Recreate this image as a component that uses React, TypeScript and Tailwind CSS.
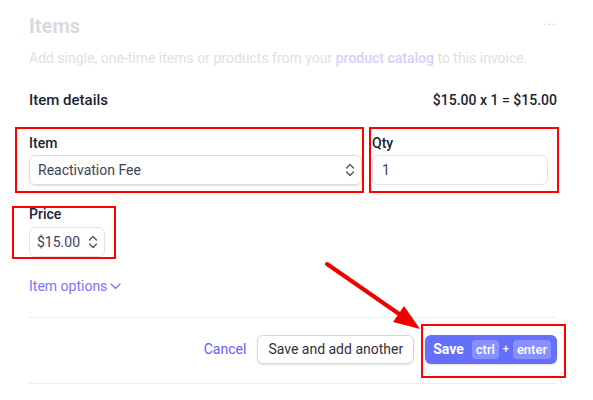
import React from "react";

function UpDown({ className = "" }: { className?: string }) {
  return (
    <svg width="10" height="14" viewBox="0 0 10 14" className={className} fill="none" stroke="currentColor" strokeWidth="1.4" strokeLinecap="round" strokeLinejoin="round">
      <path d="M1.5 5 L5 1.5 L8.5 5" />
      <path d="M1.5 9 L5 12.5 L8.5 9" />
    </svg>
  );
}

export default function App() {
  return (
    <div className="relative w-[593px] h-[400px] bg-white overflow-hidden" style={{ fontFamily: 'Roboto, "Noto Sans", sans-serif' }}>
      <div className="pl-[29px] pr-[36px] pt-[11px]">
        <div className="flex items-center justify-between">
          <h1 className="text-[20px] leading-[30px] font-bold text-[#d9dadf]">Items</h1>
          <span className="text-[14px] text-[#cfd1d8] tracking-[1px] -mt-[2px]">···</span>
        </div>
        <p className="mt-[7px] text-[14px] leading-[20px] text-[#dfe0e5]">
          Add single, one-time items or products from your <span className="text-[#d3d0ff] font-medium">product catalog</span> to this invoice.
        </p>
        <div className="mt-[22px] flex items-center justify-between">
          <span className="text-[15px] leading-[20px] font-medium text-[#1a1f36]">Item details</span>
          <span className="text-[14px] leading-[20px] font-medium text-[#1a1f36]">$15.00 x 1 = $15.00</span>
        </div>
        <div className="mt-[23px] flex gap-[10px]">
          <div className="w-[333px]">
            <div className="text-[14px] leading-[20px] font-medium text-[#1a1f36]">Item</div>
            <div className="mt-[2px] h-[30px] flex items-center justify-between rounded-[6px] border border-[#dcdde3] shadow-[0_1px_2px_rgba(0,0,0,0.12)] pl-[8px] pr-[6px]">
              <span className="text-[14px] text-[#3c4257]">Reactivation Fee</span>
              <UpDown className="text-[#4f566b]" />
            </div>
          </div>
          <div className="w-[176px]">
            <div className="text-[14px] leading-[20px] font-medium text-[#1a1f36]">Qty</div>
            <div className="mt-[2px] h-[30px] flex items-center rounded-[6px] border border-[#e3e4e8] pl-[9px]">
              <span className="text-[14px] text-[#3c4257]">1</span>
            </div>
          </div>
        </div>
        <div className="mt-[19px] w-[76px]">
          <div className="text-[14px] leading-[20px] font-medium text-[#1a1f36]">Price</div>
          <div className="mt-[3px] h-[30px] flex items-center justify-between rounded-[6px] border border-[#e0e1e6] pl-[7px] pr-[6px]">
            <span className="text-[14px] text-[#3c4257]">$15.00</span>
            <UpDown className="text-[#4f566b]" />
          </div>
        </div>
        <div className="mt-[19px] flex items-center gap-[3px] text-[14px] leading-[20px] text-[#7a73ff]">
          <span>Item options</span>
          <svg width="11" height="7" viewBox="0 0 11 7" fill="none" stroke="currentColor" strokeWidth="1.2" strokeLinecap="round" strokeLinejoin="round">
            <path d="M1 1 L5.5 5.5 L10 1" />
          </svg>
        </div>
        <div className="mt-[21px] border-t border-[#ebeef1]" />
        <div className="mt-[17px] flex items-center justify-end">
          <span className="text-[14px] text-[#635bff] mr-[11px]">Cancel</span>
          <button className="h-[29px] px-[10px] rounded-[6px] border border-[#d5d7de] bg-white shadow-[0_1px_2px_rgba(0,0,0,0.1)] text-[14px] text-[#30313d] mr-[11px]">
            Save and add another
          </button>
          <button className="h-[29px] pl-[8px] pr-[6px] rounded-[6px] bg-[#6570fa] flex items-center text-white text-[14px] font-bold shadow-[0_1px_2px_rgba(0,0,0,0.12)]">
            <span>Save</span>
            <span className="ml-[8px] px-[4px] h-[19px] leading-[19px] rounded-[4px] bg-[#8a90fb] text-[13px] font-medium">ctrl</span>
            <span className="mx-[4px] text-[11px] font-medium">+</span>
            <span className="px-[4px] h-[19px] leading-[19px] rounded-[4px] bg-[#8a90fb] text-[13px] font-medium">enter</span>
          </button>
        </div>
        <div className="mt-[19px] border-t border-[#ebeef1]" />
      </div>

      {/* annotations */}
      <div className="absolute left-[15px] top-[127px] w-[349px] h-[66px] border-2 border-[#ff0000]" />
      <div className="absolute left-[369px] top-[127px] w-[190px] h-[66px] border-2 border-[#ff0000]" />
      <div className="absolute left-[12px] top-[206px] w-[104px] h-[53px] border-2 border-[#ff0000]" />
      <div className="absolute left-[421px] top-[324px] w-[145px] h-[54px] border-2 border-[#ff0000]" />
      <svg className="absolute left-0 top-0" width="593" height="400" viewBox="0 0 593 400">
        <line x1="327" y1="264" x2="402" y2="316" stroke="#ee0000" strokeWidth="4" strokeLinecap="round" />
        <polygon points="420,329 393,322 404,306" fill="#ee0000" />
      </svg>
    </div>
  );
}
